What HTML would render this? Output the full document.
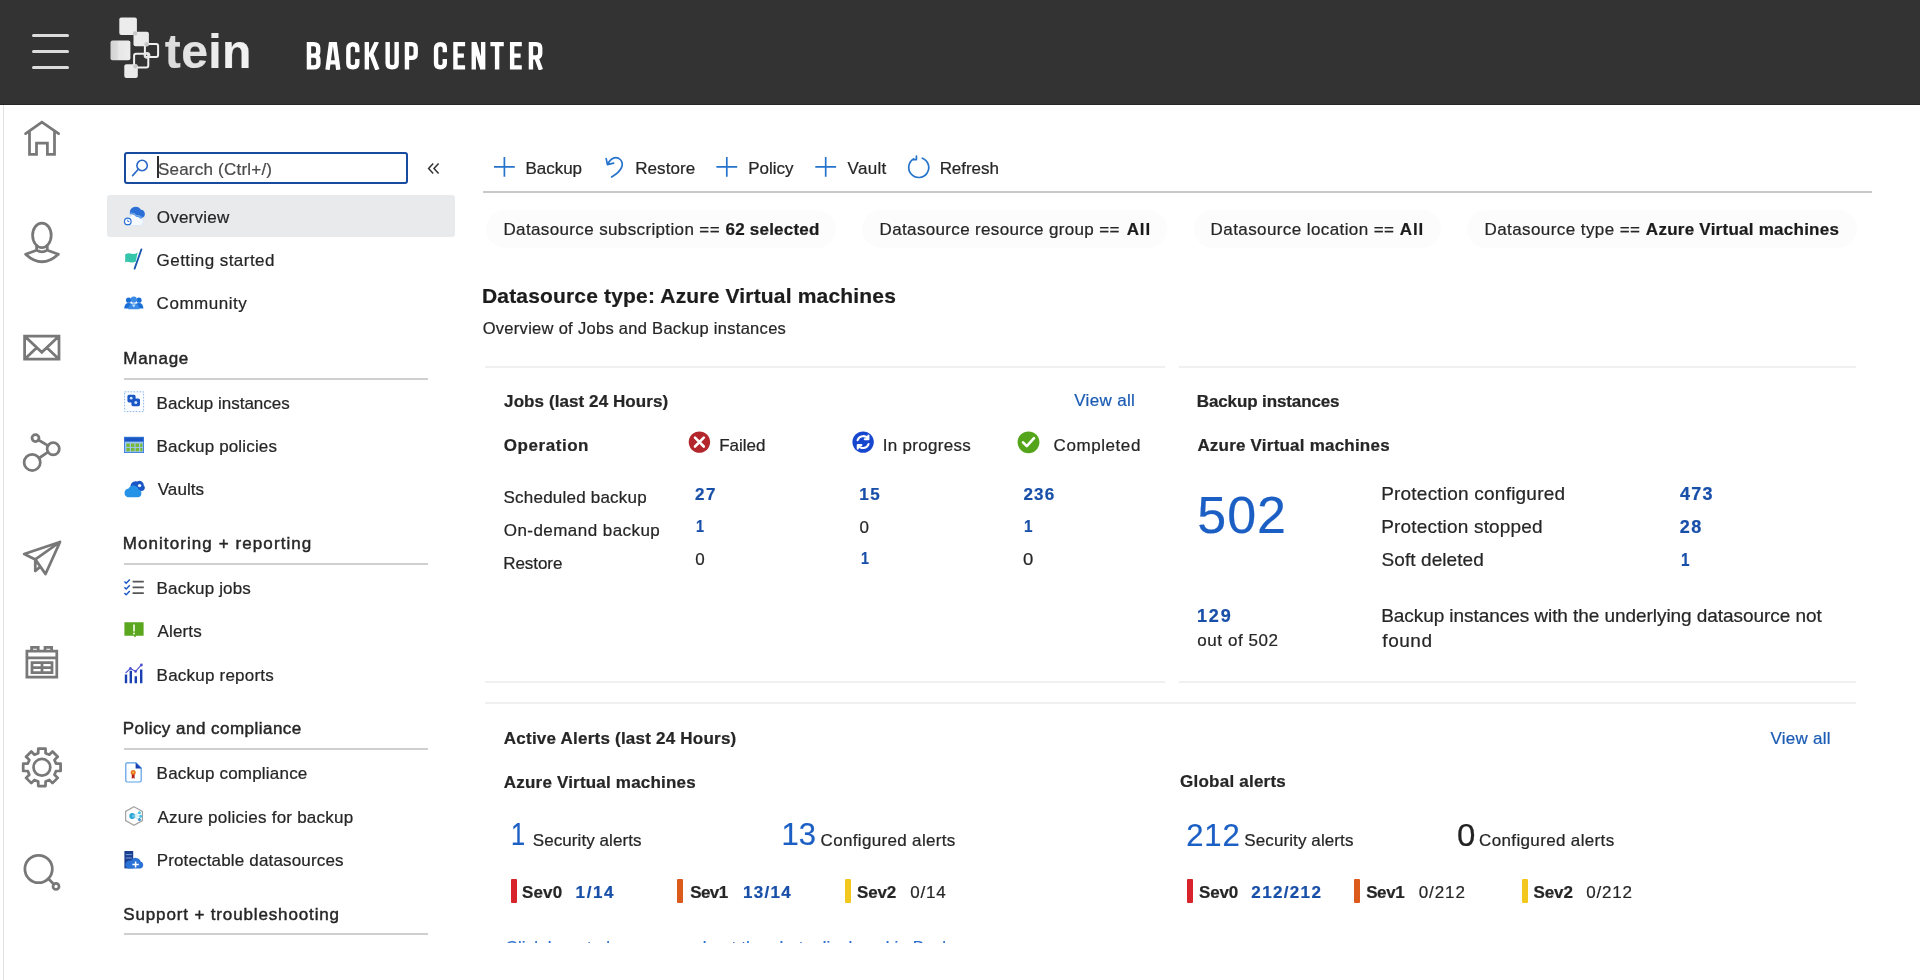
<!DOCTYPE html>
<html lang="en">
<head>
<meta charset="utf-8">
<title>Backup Center</title>
<style>
*{box-sizing:border-box;margin:0;padding:0}
html,body{width:1920px;height:980px;overflow:hidden;background:#fff}
body{position:relative;will-change:transform;font-family:"Liberation Sans",sans-serif;color:#262626}
.t{position:absolute;white-space:nowrap;line-height:1;display:block;-webkit-text-stroke:0.22px}
.abs{position:absolute}
.hdr{position:absolute;left:0;top:0;width:1920px;height:105px;background:#333333}
.hr{position:absolute;height:2px;background:#cfcfcf}
.hrf{position:absolute;height:2px;background:#f0f0f0}
.bar{position:absolute;width:6px;height:24px;border-radius:1px}
svg{position:absolute;overflow:visible}
.pill{position:absolute;height:38px;border-radius:19px;background:#fcfcfc}
</style>
</head>
<body>
<div class="hdr"></div>
<div class="abs" style="left:0;top:104px;width:1920px;height:1px;background:#262626"></div>
<div class="abs" style="left:32px;top:34.2px;width:37px;height:3px;border-radius:2px;background:#dcdcdc"></div>
<div class="abs" style="left:32px;top:50.2px;width:37px;height:3px;border-radius:2px;background:#dcdcdc"></div>
<div class="abs" style="left:32px;top:66.2px;width:37px;height:3px;border-radius:2px;background:#dcdcdc"></div>
<svg style="left:0;top:0" width="300" height="105" viewBox="0 0 300 105">
  <defs>
    <linearGradient id="lg1" x1="0" y1="0" x2="1" y2="0"><stop offset="0" stop-color="#d2d2d2"/><stop offset="0.35" stop-color="#dcdcdc"/><stop offset="0.36" stop-color="#e6e6e6"/><stop offset="1" stop-color="#ededed"/></linearGradient>
  </defs>
  <rect x="119.3" y="17.5" width="17.6" height="17.6" rx="2" fill="#ececec"/>
  <rect x="133.5" y="31.8" width="15.4" height="14.5" rx="2" fill="#ebebeb"/>
  <rect x="110.5" y="40.5" width="19.9" height="19.7" rx="2" fill="url(#lg1)"/>
  <rect x="124.3" y="64.3" width="13.5" height="13.8" rx="2" fill="#ebebeb"/>
  <rect x="144.9" y="43.9" width="13.2" height="13.2" rx="2" fill="none" stroke="#f0f0f0" stroke-width="2"/>
  <rect x="134.1" y="53.7" width="14.2" height="13.7" rx="2" fill="none" stroke="#f0f0f0" stroke-width="2"/>
  <circle cx="135.1" cy="33.4" r="2.2" fill="#c9c9c9"/>
  <circle cx="146.6" cy="44.3" r="2.2" fill="#c9c9c9"/>
  <circle cx="147" cy="55.3" r="2.6" fill="none" stroke="#e4e4e4" stroke-width="1.6"/>
  <circle cx="135.3" cy="66.4" r="2.2" fill="#c9c9c9"/>
</svg>
<span class="t" style="left:164.8px;top:27.8px;font-size:48px;font-weight:700;color:#e6e6e6;letter-spacing:0.35px"><span style="color:#dcdcdc">t</span><span style="color:#e3e3e3">e</span><span style="color:#ececec">i</span><span style="color:#f1f1f1">n</span></span>
<svg style="left:0;top:42px;overflow:hidden" width="560" height="27.5" viewBox="0 0 560 28" preserveAspectRatio="none" fill="none" stroke="#ffffff" stroke-width="4.4" stroke-linejoin="miter">
  <g transform="translate(306.6,0)"><path d="M2.35,0V28M2.35,2.2H7.2Q11.6,2.2 11.6,6.2V9.8Q11.6,13.8 7.2,13.8H2.35M7.2,13.8Q11.8,13.8 11.8,17.8V21.8Q11.8,25.8 7.2,25.8H2.35"/></g>
  <g transform="translate(325.2,0)"><path d="M2.3,28.3L5.7,2.3H9.7L13.1,28.3M4.2,20.8H11.2"/></g>
  <g transform="translate(346,0)"><path d="M11.3,10.5V6.4Q11.3,2.3 6.8,2.3Q2.35,2.3 2.35,6.4V21.6Q2.35,25.7 6.8,25.7Q11.3,25.7 11.3,21.6V17.2"/></g>
  <g transform="translate(364.5,0)"><path d="M2.35,0V28M12.4,-0.3L5.2,15.2M6.6,11.6L12.9,28.3"/></g>
  <g transform="translate(385.3,0)"><path d="M2.35,0V21.6Q2.35,25.7 6.85,25.7Q11.35,25.7 11.35,21.6V0"/></g>
  <g transform="translate(404.6,0)"><path d="M2.35,0V28M2.35,2.2H7Q11.1,2.2 11.1,6.2V12.1Q11.1,16.1 7,16.1H2.35"/></g>
  <g transform="translate(433.7,0)"><path d="M11.1,10.5V6.4Q11.1,2.3 6.7,2.3Q2.35,2.3 2.35,6.4V21.6Q2.35,25.7 6.7,25.7Q11.1,25.7 11.1,21.6V17.2"/></g>
  <g transform="translate(453.1,0)"><path d="M2.35,0V28M2.35,2.2H12M2.35,13.8H10.8M2.35,25.8H12"/></g>
  <g transform="translate(471.4,0)"><path d="M2.35,28V0M11.75,0V28M3,0.5L11.1,27.5"/></g>
  <g transform="translate(490.4,0)"><path d="M0,2.2H13.4M6.7,0V28"/></g>
  <g transform="translate(509.8,0)"><path d="M2.35,0V28M2.35,2.2H12M2.35,13.8H10.8M2.35,25.8H12"/></g>
  <g transform="translate(528.6,0)"><path d="M2.35,0V28M2.35,2.2H7.4Q11.6,2.2 11.6,6.2V11.6Q11.6,15.6 7.4,15.6H2.35M7.6,15.4L12.3,28.3"/></g>
</svg>

<div class="abs" style="left:3px;top:105px;width:1px;height:875px;background:#e1e1e1"></div>
<svg style="left:0;top:0" width="100" height="980" viewBox="0 0 100 980" fill="none" stroke="#787878" stroke-width="2.75" stroke-linejoin="round" stroke-linecap="round">
  <path d="M25.6,133.6L41.9,122.2L58.6,133.6M29.5,131.2V154.3H36.5V143.2H47.4V154.3H54.5V131.2" stroke-linejoin="miter"/>
  <ellipse cx="41.9" cy="235.3" rx="9.3" ry="12.3"/>
  <path d="M36.6,246.2V250.2L25.6,254.2Q41.9,269.4 58.4,254.2L47.3,250.2V246.2M36.6,250.2Q41.9,253.6 47.3,250.2"/>
  <path d="M24.6,336.1H59V359.2H24.6ZM24.8,336.3L41.8,352.3L58.8,336.3M24.8,359L36.4,348M58.8,359L47.2,348" stroke-linejoin="miter"/>
  <circle cx="35.5" cy="438.1" r="3.5"/><circle cx="53.2" cy="448.8" r="6.1"/><circle cx="32.2" cy="462.4" r="8.1"/>
  <path d="M38.5,440L48,445.6M47.9,452.2L39.2,458"/>
  <path d="M60,542L24.2,554L35.3,559.4L60,542L45.5,574L35.3,559.4V571L40.4,566.6" stroke-linejoin="round"/>
  <path d="M26.9,651.2H56.8V677H26.9ZM26.9,657.8H56.8M31.6,651.2V647.4H38.2V651.2M45,651.2V647.4H51.6V651.2M32,662.6H52V672.6H32ZM32,667.6H52M42,662.6V672.6" stroke-linejoin="miter"/>
  <path d="M38.2,753.2 L38.3,748.6 L45.5,748.6 L45.6,753.2 L49.3,754.7 L52.5,751.5 L57.7,756.7 L54.5,759.9 L56.0,763.6 L60.6,763.7 L60.6,770.9 L56.0,771.0 L54.5,774.7 L57.7,777.9 L52.5,783.1 L49.3,779.9 L45.6,781.4 L45.5,786.0 L38.3,786.0 L38.2,781.4 L34.5,779.9 L31.3,783.1 L26.1,777.9 L29.3,774.7 L27.8,771.0 L23.2,770.9 L23.2,763.7 L27.8,763.6 L29.3,759.9 L26.1,756.7 L31.3,751.5 L34.5,754.7Z"/>
  <circle cx="41.9" cy="767.3" r="8.4"/>
  <circle cx="38.6" cy="869" r="13.7"/>
  <path d="M48.4,878.8L53.8,884.2"/><circle cx="56" cy="886.4" r="3"/>
</svg>
<div class="abs" style="left:107px;top:195px;width:348px;height:42px;border-radius:3px;background:#e9eaec"></div>
<div class="abs" style="left:124px;top:152px;width:283.5px;height:32px;border:2.6px solid #184a9e;border-radius:3px;background:#fff"></div>
<div class="abs cur" style="left:156.6px;top:156.4px;width:2.1px;height:22px;background:#2e2e2e"></div>
<svg style="left:130px;top:157px" width="22" height="22" viewBox="0 0 22 22" fill="none" stroke="#2a68c8" stroke-width="1.6" stroke-linecap="round"><circle cx="12.1" cy="8.5" r="5.2"/><path d="M8.3,12.3L2.6,18.6"/></svg>
<svg style="left:426px;top:160px" width="16" height="16" viewBox="0 0 16 16" fill="none" stroke="#333" stroke-width="1.5"><path d="M7.2,3.6L2.6,8.6L7.2,13.6M12.6,3.6L8,8.6L12.6,13.6"/></svg>
<div class="hr" style="left:124px;top:377.6px;width:304px"></div>
<div class="hr" style="left:124px;top:562.8px;width:304px"></div>
<div class="hr" style="left:124px;top:748.3px;width:304px"></div>
<div class="hr" style="left:124px;top:933.4px;width:304px"></div>
<!-- sidebar icons -->
<svg style="left:0;top:0" width="200" height="980" viewBox="0 0 200 980">
  <!-- overview: cloud -->
  <path d="M127.6,225.6H139.6A3.8,3.8 0 0 0 140.4,218.1A5.4,5.4 0 0 0 130.4,216.6A4.7,4.7 0 0 0 127.6,225.6Z" fill="#f6faff" stroke="#d3e5f8" stroke-width="0.7"/>
  <g transform="translate(-1.6,-1.6)"><path d="M131.4,214.6A6,6 0 0 1 142.6,211.4A4.2,4.2 0 0 1 144,219.4Q142,216.6 138.4,217.4Q135.4,213.4 131.4,214.6Z" fill="#2a6fd6"/>
  <path d="M131.4,214.6Q135.4,213.4 138.4,217.4Q142,216.6 144,219.4Q143,220.6 141.8,220.4Q140.6,218 138,218.6Q135,214.6 131.4,216.2Z" fill="#5b9be8"/></g>
  <circle cx="127.8" cy="221.4" r="3.3" fill="#fff" stroke="#2a6fd6" stroke-width="1.2"/>
  <path d="M127.8,219.6V221.6H129.4" fill="none" stroke="#2a6fd6" stroke-width="0.9"/>
  <!-- getting started: flag -->
  <path d="M125.2,254.2Q128.6,252.4 131.6,253.8Q134.4,254.8 137.6,252.4L135.8,261.4Q132.8,263.2 130,262.2Q127.4,261.4 125.2,262.2Z" fill="#34c5aa"/>
  <path d="M141.4,249.4L134.6,268.6" stroke="#1a56b0" stroke-width="1.8" stroke-linecap="round"/>
  <!-- community -->
  <circle cx="128.6" cy="300.2" r="2.6" fill="#1a6fd6"/><circle cx="139" cy="300.2" r="2.6" fill="#1a6fd6"/>
  <path d="M124.2,308.6Q124.4,303 128.6,303Q132,303 133.8,306Q135.6,303 139,303Q143.2,303 143.4,308.6Z" fill="#1a6fd6"/>
  <circle cx="133.8" cy="299.6" r="3.1" fill="#3b8ae6"/>
  <path d="M128.2,309.2Q128.6,303.4 133.8,303.4Q139,303.4 139.4,309.2Z" fill="#3b8ae6"/>
  <path d="M132,304.4L133.8,307.6L135.6,304.4Z" fill="#bfe3ff"/>
  <!-- backup instances -->
  <rect x="124.6" y="391.8" width="19" height="19.8" fill="#fafcff" stroke="#8db6ea" stroke-width="1" stroke-dasharray="1.6 1.4"/>
  <rect x="127.4" y="394.8" width="8.2" height="7.6" rx="1.6" fill="#1a56c4"/>
  <rect x="131.4" y="398.6" width="8.6" height="7.6" rx="1.6" fill="#1a56c4"/>
  <circle cx="131.2" cy="398.2" r="1.4" fill="#cfe2fb"/><circle cx="135.8" cy="402.6" r="1.5" fill="#cfe2fb"/>
  <!-- backup policies -->
  <rect x="124.4" y="437.2" width="19.2" height="15.4" fill="#9cc7f2"/>
  <rect x="124.4" y="437.2" width="19.2" height="4.4" fill="#1a56c4"/>
  <path d="M126.4,443.6H129.8V447H126.4ZM131,443.6H134.4V447H131ZM135.6,443.6H139V447H135.6ZM140.2,443.6H142.4V447H140.2ZM126.4,448H129.8V451.2H126.4ZM131,448H134.4V451.2H131ZM135.6,448H139V451.2H135.6ZM140.2,448H142.4V451.2H140.2Z" fill="#78b833"/>
  <rect x="124.4" y="437.2" width="19.2" height="15.4" fill="none" stroke="#2a72d6" stroke-width="0.8"/>
  <!-- vaults -->
  <path d="M133.6,490.6A4.6,4.6 0 0 1 137.2,481.6A4.2,4.2 0 0 1 143.8,485.4A3.2,3.2 0 0 1 142,491Z" fill="#1a56c4"/>
  <circle cx="139.6" cy="485.6" r="1.7" fill="#e6f1fd"/>
  <path d="M127.8,497.2H137.8A4,4 0 0 0 138.6,489.4A5.4,5.4 0 0 0 128.6,488.4A4.5,4.5 0 0 0 127.8,497.2Z" fill="#2492e6"/>
  <!-- backup jobs -->
  <g fill="none" stroke="#1a56c4" stroke-width="1.4"><path d="M124.4,581.4L126.2,583.2L129.8,579.4M124.4,587.2L126.2,589L129.8,585.2M124.4,593L126.2,594.8L129.8,591"/></g>
  <g stroke="#555" stroke-width="1.7"><path d="M132.6,581.6H143.8M132.6,587.4H143.8M132.6,593.2H143.8"/></g>
  <!-- alerts -->
  <path d="M124.4,622.2H143.6V635.8H136.2L135,637.6L133.8,635.8H124.4Z" fill="#5aa61e"/>
  <path d="M134,624.4V631.4" stroke="#eef8d8" stroke-width="1.8"/><circle cx="134" cy="633.6" r="1" fill="#eef8d8"/>
  <!-- backup reports -->
  <g stroke="#1a3fb0" stroke-width="2.4"><path d="M126,683.2V674.4M130.8,683.2V670.8M135.8,683.2V676.2M141.2,683.2V669.6"/></g>
  <path d="M125.6,673L130.4,668.4L135.6,671.4L141.6,664.6" fill="none" stroke="#4a4fd0" stroke-width="1.1"/>
  <circle cx="130.4" cy="668.4" r="1.3" fill="#4a4fd0"/><circle cx="135.6" cy="671.4" r="1.3" fill="#4a4fd0"/><circle cx="141.4" cy="665" r="1.4" fill="#4a4fd0"/>
  <!-- backup compliance -->
  <path d="M127,762.8H136L141.2,768V780.6Q141.2,782 139.8,782H127Q125.8,782 125.8,780.6V764Q125.8,762.8 127,762.8Z" fill="#fdfeff" stroke="#5a9fe6" stroke-width="1.2"/>
  <path d="M135.6,762.4L141.6,768.4H135.6Z" fill="#1a3fb0"/>
  <circle cx="133.2" cy="772.6" r="2.5" fill="#e8701a"/><path d="M131.8,774.4V779L133.2,777.8L134.6,779V774.4Z" fill="#b3201c"/>
  <circle cx="133.2" cy="772.6" r="1" fill="#f6c445"/>
  <!-- azure policies -->
  <path d="M134,806.8L142.4,811.4V820.6L134,825.2L125.6,820.6V811.4Z" fill="none" stroke="#a3a3a3" stroke-width="1.2"/>
  <circle cx="132.2" cy="816" r="2.9" fill="#2aa6d6"/><circle cx="139.4" cy="812.8" r="1.5" fill="#3fc0e0"/><circle cx="140.6" cy="816.2" r="1.5" fill="#3fc0e0"/><circle cx="139.4" cy="819.6" r="1.5" fill="#2a8fd0"/>
  <path d="M132.2,816L139.4,812.8M132.2,816H140.6M132.2,816L139.4,819.6" stroke="#8fd4ea" stroke-width="0.7"/>
  <!-- protectable datasources -->
  <rect x="124.4" y="851" width="8.8" height="17.4" fill="#1b3f8f"/>
  <path d="M125.8,854.6H131.8M125.8,858H131.8" stroke="#7ba3e0" stroke-width="1"/>
  <path d="M128,868.6H140A3.7,3.7 0 0 0 140.6,861.4A5.2,5.2 0 0 0 131,860.8A4,4 0 0 0 128,868.6Z" fill="#2a72d6"/>
  <path d="M132.4,864.4H138.8M135.6,861.4V867.4" stroke="#fff" stroke-width="1.5"/>
</svg>

<!-- toolbar icons -->
<svg style="left:0;top:0" width="1100" height="200" viewBox="0 0 1100 200" fill="none" stroke="#2673cc" stroke-width="1.7">
  <path d="M504.4,157V176.8M494,166.9H514.8"/>
  <path d="M726.8,157V176.8M716.4,166.9H737.2"/>
  <path d="M825.7,157V176.8M815.3,166.9H836.1"/>
  <path d="M606.2,158.6L607.4,164.6L613.6,163.2M607.6,164.2Q612.4,155.6 618.8,158.4Q623.8,161.6 621.6,167.4Q619.6,172.4 611.6,177" stroke-linecap="round" stroke-linejoin="round"/>
  <path d="M913.8,158.8A10,10 0 1 0 922.4,158.2M916.4,156V159.6H912.6" stroke-linecap="round" stroke-linejoin="round"/>
</svg>
<div class="hr" style="left:482.5px;top:190.8px;width:1389.5px;background:#c9c9c9"></div>
<!-- pills -->
<div class="pill" style="left:486px;top:210px;width:350px"></div>
<div class="pill" style="left:862px;top:210px;width:305px"></div>
<div class="pill" style="left:1194px;top:210px;width:247px"></div>
<div class="pill" style="left:1467px;top:210px;width:390px"></div>
<!-- card lines -->
<div class="hrf" style="left:485px;top:365.5px;width:680px"></div>
<div class="hrf" style="left:485px;top:681px;width:680px"></div>
<div class="hrf" style="left:1179px;top:365.5px;width:677px"></div>
<div class="hrf" style="left:1179px;top:681px;width:677px"></div>
<div class="hrf" style="left:485px;top:702px;width:1371px"></div>
<!-- status icons -->
<svg style="left:0;top:0" width="1200" height="500" viewBox="0 0 1200 500">
  <circle cx="699.4" cy="442.1" r="10.7" fill="#b3262b"/>
  <path d="M695,437.7L703.8,446.5M703.8,437.7L695,446.5" stroke="#fff" stroke-width="2.6" stroke-linecap="round"/>
  <circle cx="863.1" cy="442.1" r="10.7" fill="#1747cf"/>
  <g fill="none" stroke="#fff" stroke-width="2.1" stroke-linecap="round" stroke-linejoin="round">
    <path d="M857.6,440.2A5.8,5.8 0 0 1 868,438.8M868.4,435.6V439.2H864.8"/>
    <path d="M868.6,444A5.8,5.8 0 0 1 858.2,445.4M857.8,448.6V445H861.4"/>
  </g>
  <circle cx="1028.5" cy="442.3" r="10.9" fill="#55a51c"/>
  <path d="M1023,442.4L1026.8,446.2L1034,438.2" fill="none" stroke="#fff" stroke-width="2.6" stroke-linecap="round" stroke-linejoin="round"/>
</svg>
<!-- severity bars -->
<div class="bar" style="left:510.6px;top:879px;background:#d9232a"></div>
<div class="bar" style="left:677px;top:879px;background:#db5a1c"></div>
<div class="bar" style="left:845px;top:879px;background:#f2c81e"></div>
<div class="bar" style="left:1186.9px;top:879px;background:#d9232a"></div>
<div class="bar" style="left:1354px;top:879px;background:#db5a1c"></div>
<div class="bar" style="left:1522.2px;top:879px;background:#f2c81e"></div>
<!-- clipped link line -->
<div class="abs" style="left:500px;top:938.6px;width:460px;height:4.2px;overflow:hidden"><span class="t" style="left:5.6px;top:0;font-size:17px;color:#2a6fd0;letter-spacing:0.1px">Click here to learn more about the alerts displayed in Backup center</span></div>

<span class="t" style="left:157.96px;top:161.00px;font-size:17px;color:#4a4a4a;letter-spacing:0.220px;">Search (Ctrl+/)</span>
<span class="t" style="left:156.70px;top:209.00px;font-size:17px;letter-spacing:0.236px;">Overview</span>
<span class="t" style="left:156.55px;top:252.00px;font-size:17px;letter-spacing:0.455px;">Getting started</span>
<span class="t" style="left:156.58px;top:295.00px;font-size:17px;letter-spacing:0.539px;">Community</span>
<span class="t" style="left:123.25px;top:350.01px;font-size:17px;letter-spacing:0.725px;-webkit-text-stroke:0.45px;">Manage</span>
<span class="t" style="left:156.61px;top:395.01px;font-size:17px;letter-spacing:-0.008px;">Backup instances</span>
<span class="t" style="left:156.61px;top:438.01px;font-size:17px;letter-spacing:0.158px;">Backup policies</span>
<span class="t" style="left:157.69px;top:481.00px;font-size:17px;letter-spacing:0.086px;">Vaults</span>
<span class="t" style="left:122.68px;top:535.00px;font-size:17px;letter-spacing:1.085px;-webkit-text-stroke:0.45px;">Monitoring + reporting</span>
<span class="t" style="left:156.61px;top:580.00px;font-size:17px;letter-spacing:0.158px;">Backup jobs</span>
<span class="t" style="left:157.55px;top:623.01px;font-size:17px;letter-spacing:0.137px;">Alerts</span>
<span class="t" style="left:156.61px;top:667.01px;font-size:17px;letter-spacing:0.215px;">Backup reports</span>
<span class="t" style="left:122.68px;top:720.00px;font-size:17px;letter-spacing:0.471px;-webkit-text-stroke:0.45px;">Policy and compliance</span>
<span class="t" style="left:156.61px;top:765.01px;font-size:17px;letter-spacing:0.205px;">Backup compliance</span>
<span class="t" style="left:157.55px;top:809.01px;font-size:17px;letter-spacing:0.238px;">Azure policies for backup</span>
<span class="t" style="left:156.63px;top:852.01px;font-size:17px;letter-spacing:0.163px;">Protectable datasources</span>
<span class="t" style="left:123.26px;top:906.01px;font-size:17px;letter-spacing:0.860px;-webkit-text-stroke:0.45px;">Support + troubleshooting</span>
<span class="t" style="left:525.59px;top:160.00px;font-size:17px;letter-spacing:-0.046px;">Backup</span>
<span class="t" style="left:635.24px;top:160.00px;font-size:17px;letter-spacing:0.062px;">Restore</span>
<span class="t" style="left:748.24px;top:160.00px;font-size:17px;letter-spacing:0.008px;">Policy</span>
<span class="t" style="left:847.56px;top:160.00px;font-size:17px;letter-spacing:0.285px;">Vault</span>
<span class="t" style="left:939.63px;top:160.00px;font-size:17px;letter-spacing:-0.049px;">Refresh</span>
<span class="t" style="left:481.98px;top:285.00px;font-size:21px;font-weight:700;color:#1c1c1c;letter-spacing:0.172px;">Datasource type: Azure Virtual machines</span>
<span class="t" style="left:482.65px;top:320.02px;font-size:16.5px;letter-spacing:0.296px;">Overview of Jobs and Backup instances</span>
<span class="t" style="left:504.11px;top:393.00px;font-size:17px;font-weight:700;letter-spacing:0.084px;">Jobs (last 24 Hours)</span>
<span class="t" style="left:1074.13px;top:392.01px;font-size:17px;color:#1c5cb4;letter-spacing:0.350px;">View all</span>
<span class="t" style="left:503.83px;top:437.00px;font-size:17px;font-weight:700;letter-spacing:0.548px;">Operation</span>
<span class="t" style="left:719.23px;top:437.00px;font-size:17px;letter-spacing:-0.018px;">Failed</span>
<span class="t" style="left:882.71px;top:437.00px;font-size:17px;letter-spacing:0.313px;">In progress</span>
<span class="t" style="left:1053.56px;top:437.00px;font-size:17px;letter-spacing:0.573px;">Completed</span>
<span class="t" style="left:503.53px;top:489.00px;font-size:17px;letter-spacing:0.218px;">Scheduled backup</span>
<span class="t" style="left:695.11px;top:486.00px;font-size:17px;font-weight:700;color:#184fa8;letter-spacing:1.396px;">27</span>
<span class="t" style="left:859.21px;top:486.00px;font-size:17px;font-weight:700;color:#184fa8;letter-spacing:1.580px;">15</span>
<span class="t" style="left:1023.54px;top:486.00px;font-size:17px;font-weight:700;color:#184fa8;letter-spacing:1.093px;">236</span>
<span class="t" style="left:503.71px;top:522.00px;font-size:17px;letter-spacing:0.454px;">On-demand backup</span>
<span class="t" style="left:695.73px;top:518.00px;font-size:17px;font-weight:700;color:#184fa8;transform:scaleX(0.848);transform-origin:0 0;">1</span>
<span class="t" style="left:859.54px;top:519.01px;font-size:17px;color:#262626;">0</span>
<span class="t" style="left:1024.31px;top:518.00px;font-size:17px;font-weight:700;color:#184fa8;transform:scaleX(0.897);transform-origin:0 0;">1</span>
<span class="t" style="left:503.23px;top:555.00px;font-size:17px;letter-spacing:-0.057px;">Restore</span>
<span class="t" style="left:695.13px;top:551.00px;font-size:17px;color:#262626;">0</span>
<span class="t" style="left:860.58px;top:550.00px;font-size:17px;font-weight:700;color:#184fa8;transform:scaleX(0.838);transform-origin:0 0;">1</span>
<span class="t" style="left:1023.44px;top:551.00px;font-size:17px;color:#262626;transform:scaleX(1.087);transform-origin:0 0;">0</span>
<span class="t" style="left:1196.79px;top:393.01px;font-size:17px;font-weight:700;letter-spacing:-0.120px;">Backup instances</span>
<span class="t" style="left:1197.39px;top:437.01px;font-size:17px;font-weight:700;letter-spacing:0.215px;">Azure Virtual machines</span>
<span class="t" style="left:1197.26px;top:489.01px;font-size:52px;color:#1c5fc4;letter-spacing:0.974px;">502</span>
<span class="t" style="left:1381.13px;top:484.01px;font-size:19px;letter-spacing:0.219px;">Protection configured</span>
<span class="t" style="left:1680.08px;top:485.01px;font-size:18px;font-weight:700;color:#184fa8;letter-spacing:1.226px;">473</span>
<span class="t" style="left:1381.13px;top:517.01px;font-size:19px;letter-spacing:0.184px;">Protection stopped</span>
<span class="t" style="left:1679.63px;top:518.01px;font-size:18px;font-weight:700;color:#184fa8;letter-spacing:1.728px;">28</span>
<span class="t" style="left:1381.61px;top:550.00px;font-size:19px;letter-spacing:0.072px;">Soft deleted</span>
<span class="t" style="left:1680.83px;top:551.02px;font-size:18px;font-weight:700;color:#184fa8;transform:scaleX(0.848);transform-origin:0 0;">1</span>
<span class="t" style="left:1196.88px;top:607.00px;font-size:18px;font-weight:700;color:#184fa8;letter-spacing:1.955px;">129</span>
<span class="t" style="left:1197.27px;top:632.00px;font-size:17px;letter-spacing:0.573px;">out of 502</span>
<span class="t" style="left:1381.13px;top:606.01px;font-size:19px;letter-spacing:-0.059px;">Backup instances with the underlying datasource not</span>
<span class="t" style="left:1382.32px;top:631.01px;font-size:19px;letter-spacing:0.540px;">found</span>
<span class="t" style="left:503.85px;top:730.01px;font-size:17px;font-weight:700;letter-spacing:0.225px;">Active Alerts (last 24 Hours)</span>
<span class="t" style="left:503.85px;top:774.00px;font-size:17px;font-weight:700;letter-spacing:0.195px;">Azure Virtual machines</span>
<span class="t" style="left:511.35px;top:819.01px;font-size:31px;color:#1c5fc4;transform:scaleX(0.818);transform-origin:0 0;">1</span>
<span class="t" style="left:532.84px;top:832.00px;font-size:17px;letter-spacing:0.065px;">Security alerts</span>
<span class="t" style="left:781.44px;top:819.01px;font-size:31px;color:#1c5fc4;letter-spacing:0.135px;">13</span>
<span class="t" style="left:820.56px;top:832.00px;font-size:17px;letter-spacing:0.334px;">Configured alerts</span>
<span class="t" style="left:522.00px;top:884.01px;font-size:17px;font-weight:700;letter-spacing:0.138px;">Sev0</span>
<span class="t" style="left:575.60px;top:884.01px;font-size:17px;font-weight:700;color:#184fa8;letter-spacing:1.594px;">1/14</span>
<span class="t" style="left:690.22px;top:884.01px;font-size:17px;font-weight:700;letter-spacing:-0.589px;">Sev1</span>
<span class="t" style="left:742.99px;top:884.01px;font-size:17px;font-weight:700;color:#184fa8;letter-spacing:1.309px;">13/14</span>
<span class="t" style="left:857.10px;top:884.01px;font-size:17px;font-weight:700;letter-spacing:-0.183px;">Sev2</span>
<span class="t" style="left:910.25px;top:884.01px;font-size:17px;color:#262626;letter-spacing:0.815px;">0/14</span>
<span class="t" style="left:1770.60px;top:730.00px;font-size:17px;color:#1c5cb4;letter-spacing:0.220px;">View all</span>
<span class="t" style="left:1180.09px;top:773.01px;font-size:17px;font-weight:700;letter-spacing:0.228px;">Global alerts</span>
<span class="t" style="left:1186.24px;top:820.00px;font-size:31px;color:#1c5fc4;letter-spacing:0.889px;">212</span>
<span class="t" style="left:1244.31px;top:832.00px;font-size:17px;letter-spacing:0.100px;">Security alerts</span>
<span class="t" style="left:1457.39px;top:820.00px;font-size:31px;color:#222;transform:scaleX(1.064);transform-origin:0 0;">0</span>
<span class="t" style="left:1479.12px;top:832.00px;font-size:17px;letter-spacing:0.348px;">Configured alerts</span>
<span class="t" style="left:1199.10px;top:884.01px;font-size:17px;font-weight:700;letter-spacing:-0.201px;">Sev0</span>
<span class="t" style="left:1251.33px;top:884.01px;font-size:17px;font-weight:700;color:#184fa8;letter-spacing:1.343px;">212/212</span>
<span class="t" style="left:1366.15px;top:884.01px;font-size:17px;font-weight:700;letter-spacing:-0.387px;">Sev1</span>
<span class="t" style="left:1418.74px;top:884.01px;font-size:17px;color:#262626;letter-spacing:0.903px;">0/212</span>
<span class="t" style="left:1533.43px;top:884.01px;font-size:17px;font-weight:700;letter-spacing:-0.060px;">Sev2</span>
<span class="t" style="left:1586.25px;top:884.01px;font-size:17px;color:#262626;letter-spacing:0.763px;">0/212</span>
<span class="t" style="left:503.44px;top:221.01px;font-size:17px;letter-spacing:0.367px;">Datasource subscription ==</span>
<span class="t" style="left:725.54px;top:221.01px;font-size:17px;font-weight:700;color:#1c1c1c;letter-spacing:0.214px;">62 selected</span>
<span class="t" style="left:879.62px;top:221.01px;font-size:17px;letter-spacing:0.340px;">Datasource resource group ==</span>
<span class="t" style="left:1126.65px;top:221.01px;font-size:17px;font-weight:700;color:#1c1c1c;letter-spacing:0.875px;">All</span>
<span class="t" style="left:1210.62px;top:221.01px;font-size:17px;letter-spacing:0.406px;">Datasource location ==</span>
<span class="t" style="left:1399.87px;top:221.01px;font-size:17px;font-weight:700;color:#1c1c1c;letter-spacing:0.814px;">All</span>
<span class="t" style="left:1484.44px;top:221.01px;font-size:17px;letter-spacing:0.422px;">Datasource type ==</span>
<span class="t" style="left:1645.87px;top:221.01px;font-size:17px;font-weight:700;color:#1c1c1c;letter-spacing:0.255px;">Azure Virtual machines</span>
</body>
</html>
